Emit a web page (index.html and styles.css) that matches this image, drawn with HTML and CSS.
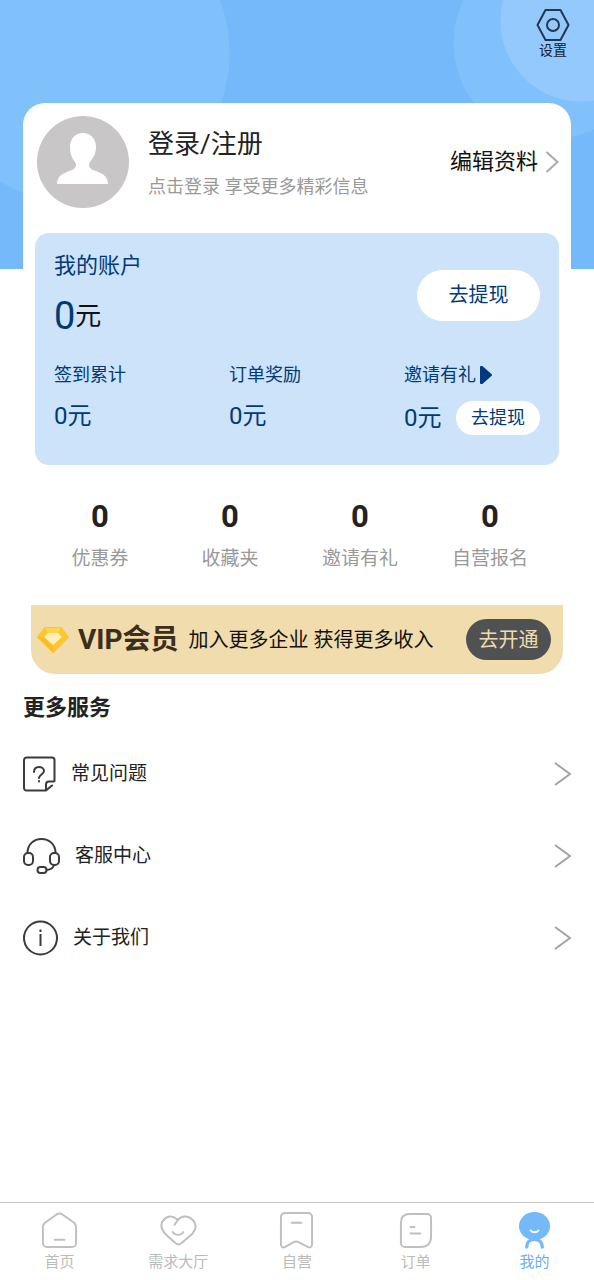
FILE: index.html
```html
<!DOCTYPE html>
<html lang="zh-CN">
<head>
<meta charset="utf-8">
<meta name="viewport" content="width=device-width, initial-scale=1">
<title>我的</title>
<link rel="stylesheet" href="styles.css">
</head>
<body>
<div class="page">
  <header class="topbar">
    <button class="settings" type="button">
      <svg width="34" height="34" viewBox="0 0 34 34" fill="none" stroke="#24384d" stroke-width="2" stroke-linejoin="round"><path d="M9.500 2h15L32.500 17l-8 15h-15L1.500 17z"/><circle cx="17" cy="17" r="6"/></svg>
      <span>设置</span>
    </button>
  </header>
  <main class="main">
    <section class="card">
      <div class="profile">
        <svg class="avatar" width="92" height="92" viewBox="0 0 92 92"><circle cx="46" cy="46" r="46" fill="#c8c6c7"/><path fill="#fff" d="M46 17c-8 0-13 6-13 14 0 7 2 11 5 15 2 3 1 6-3 8-8 3-15 5-15 14h51c0-9-7-11-15-14-4-2-5-5-3-8 3-4 6-8 6-15 0-8-5-14-13-14z"/></svg>
        <div class="profile-text">
          <h1 class="login"><a href="#login">登录/注册</a></h1>
          <p class="hint">点击登录 享受更多精彩信息</p>
        </div>
        <a class="edit" href="#edit">编辑资料
          <svg width="14" height="24" viewBox="0 0 14 24" fill="none" stroke="#aaa" stroke-width="2"><path d="M1.500 2 12.500 12 1.500 22"/></svg>
        </a>
      </div>
      <section class="account">
        <div class="account-top">
          <div>
            <h2 class="account-title">我的账户</h2>
            <p class="balance"><span class="balance-num">0</span>元</p>
          </div>
          <button class="pill" type="button">去提现</button>
        </div>
        <div class="earnings">
          <div><h3 class="earn-label">签到累计</h3><p class="earn-value">0元</p></div>
          <div><h3 class="earn-label">订单奖励</h3><p class="earn-value">0元</p></div>
          <div>
            <h3 class="earn-label">邀请有礼<svg width="12" height="20" viewBox="0 0 12 20"><path fill="#023a80" stroke="#023a80" stroke-width="2" stroke-linejoin="round" d="M1 2h1l9 8-9 8H1z"/></svg></h3>
            <div class="earn-row"><p class="earn-value">0元</p><button class="pill pill-small" type="button">去提现</button></div>
          </div>
        </div>
      </section>
    </section>
    <nav class="counts">
      <a href="#coupons"><b>0</b><span>优惠券</span></a>
      <a href="#favorites"><b>0</b><span>收藏夹</span></a>
      <a href="#invite"><b>0</b><span>邀请有礼</span></a>
      <a href="#signup"><b>0</b><span>自营报名</span></a>
    </nav>
    <section class="vip">
      <svg width="32" height="28" viewBox="0 0 32 28"><path fill="#fdc62f" stroke="#fdc62f" stroke-width="2" stroke-linejoin="round" d="M8 2h16l7 9-15 15L1 11z"/><path fill="#fdba28" d="M1 11h7l8 8v7z"/><path fill="#ffd44c" d="M8 2h16l-3 5H11z"/><path fill="#fff0b8" d="M11 7h10l4 4-9 8-9-8z"/></svg>
      <strong class="vip-title">VIP会员</strong>
      <p class="vip-text">加入更多企业 获得更多收入</p>
      <button class="vip-button" type="button">去开通</button>
    </section>
    <section class="services">
      <h2 class="services-title">更多服务</h2>
      <ul class="list">
        <li><a href="#faq">
          <svg width="33" height="36" viewBox="0 0 33 36" fill="none" stroke="#3b3b3b" stroke-width="2" stroke-linecap="round" stroke-linejoin="round"><path d="M31.500 25V4a2.500 2.500 0 0 0-2.500-2.500H3.500A2.500 2.500 0 0 0 1 4v28a2.500 2.500 0 0 0 2.500 2.500H23l6-5M31 25.500h-5a3 3 0 0 0-3 3v5.500"/><path d="M11 16c0-7 10-6 10-1 0 3-5 4-5 7"/><path d="M16 25v.5"/></svg>
          <span>常见问题</span><svg class="arrow" width="18" height="28" viewBox="0 0 18 28"><path d="M2 3l15 11L2 25"/></svg></a></li>
        <li><a href="#support">
          <svg width="37" height="36" viewBox="0 0 37 36" fill="none" stroke="#3b3b3b" stroke-width="2"><rect x="1" y="15" width="9" height="12" rx="4"/><rect x="27" y="15" width="9" height="12" rx="4"/><path d="M4.500 15C4.500 6 11 1 18.500 1s14 5 14 14M31 27c-1 3-4 5-8 5"/><rect x="14.500" y="29" width="9" height="6" rx="3"/></svg>
          <span>客服中心</span><svg class="arrow" width="18" height="28" viewBox="0 0 18 28"><path d="M2 3l15 11L2 25"/></svg></a></li>
        <li><a href="#about">
          <svg width="35" height="36" viewBox="0 0 35 36" fill="none" stroke="#3b3b3b" stroke-width="2"><circle cx="17.500" cy="18" r="16.500"/><path d="M17.500 14v12M17.500 9.500v2.500"/></svg>
          <span>关于我们</span><svg class="arrow" width="18" height="28" viewBox="0 0 18 28"><path d="M2 3l15 11L2 25"/></svg></a></li>
      </ul>
    </section>
  </main>
  <nav class="tabs">
    <a href="#home"><svg class="tab-icon" viewBox="0 0 38 38"><path d="M2 15c0-2 1-3 2-4L16 2.500c2-1.300 4-1.300 6 0L34 11c1 1 2 2 2 4v17a4 4 0 0 1-4 4H6a4 4 0 0 1-4-4zM14 28.500h10"/></svg><span>首页</span></a>
    <a href="#demands"><svg class="tab-icon" viewBox="0 0 38 38"><path d="M15 13l3.500-5c4-5 11-4 15 0s4 9 0 14L22 32c-2 2-4 2-6 0L5 22C1 17 0 12 4 8c4-5 10-4 14 0M13 20.500c3 4 8 4 11 0"/></svg><span>需求大厅</span></a>
    <a href="#self"><svg class="tab-icon" viewBox="0 0 38 38"><path d="M3 5a4 4 0 0 1 4-4h24a4 4 0 0 1 4 4v28c0 3-2 4-4 3l-10-5c-2-1-3-1-5 0L7 36c-2 1-4 0-4-3zM14 11h10"/></svg><span>自营</span></a>
    <a href="#orders"><svg class="tab-icon" viewBox="0 0 38 38"><path d="M13 2h18a4 4 0 0 1 4 4v19c0 7-4 11-11 11H8a4 4 0 0 1-4-4V11c0-6 3-9 9-9zM14 15.500h4M14 22h10"/></svg><span>订单</span></a>
    <a class="active" href="#me"><svg class="tab-icon" viewBox="0 0 38 38"><ellipse cx="19" cy="14.500" rx="16" ry="14.500" fill="#75b9fa" stroke="none"/><path d="M11 36c0-5 3-8 8-8s8 3 8 8" stroke="#75b9fa" stroke-width="3.500"/><path d="M15 19c2 2.500 6 2.500 8 0" stroke="#fff"/></svg><span>我的</span></a>
  </nav>
</div>
</body>
</html>
```
FILE: styles.css
```css
* { box-sizing: border-box; }
body, h1, h2, h3, p, ul { margin: 0; padding: 0; }
body {
  font-family: Roboto, "Noto Sans CJK SC", sans-serif;
  color: #222;
  background: #fff;
}
a { color: inherit; text-decoration: none; }
button { font: inherit; border: 0; padding: 0; cursor: pointer; }
h1, h2, h3 { font-weight: 400; }
svg { display: block; flex: none; }

.page {
  min-height: 100vh;
  display: flex;
  flex-direction: column;
  background-repeat: no-repeat;
  background-size: 100% 269px;
  background-image:
    radial-gradient(circle at calc(100% - 13px) 21px, #94c9fd 80px, transparent 81px),
    radial-gradient(circle at calc(100% - 44px) 43px, #80c1fb 96px, transparent 97px),
    radial-gradient(circle at 79px 53px, #80c1fb 150px, transparent 151px),
    linear-gradient(#75b9fa, #75b9fa);
}
.topbar {
  height: 103px;
  display: flex;
  justify-content: flex-end;
  align-items: flex-start;
  padding: 8px 24px 0;
}
.settings {
  display: flex;
  flex-direction: column;
  align-items: center;
  background: none;
  color: #14202c;
  font-size: 14px;
  line-height: 16px;
}
.main { flex: 1; }

.card {
  margin: 0 23px;
  padding: 13px 12px 0;
  background: #fff;
  border-radius: 22px 22px 0 0;
}
.profile {
  display: flex;
  align-items: center;
  gap: 19px;
  padding-left: 2px;
}
.profile-text { flex: 1; }
.login { font-size: 26px; line-height: 40px; color: #222; }
.hint { margin-top: 10px; font-size: 18px; line-height: 26px; color: #999; white-space: nowrap; }
.edit {
  display: flex;
  align-items: center;
  gap: 7px;
  font-size: 22px;
  line-height: 26px;
  color: #111;
  white-space: nowrap;
}

.account {
  margin-top: 25px;
  padding: 17px 19px 29px;
  background: #cce3fa;
  border-radius: 14px;
  color: #023a76;
}
.account-top { display: flex; justify-content: space-between; align-items: center; }
.account-title { font-size: 22px; line-height: 32px; }
.balance { display: flex; align-items: center; height: 48px; margin-top: 10px; font-size: 26px; line-height: 36px; color: #111; }
.balance-num { font-size: 38px; color: #023a76; }
.pill {
  width: 123px;
  height: 51px;
  border-radius: 26px;
  background: #fff;
  color: #023a76;
  font-size: 20px;
  line-height: 24px;
}
.pill-small { width: 84px; height: 34px; font-size: 18px; line-height: 20px; }
.earnings {
  display: grid;
  grid-template-columns: 9fr 9fr 7fr;
  margin-top: 22px;
}
.earn-label { display: flex; align-items: center; gap: 4px; font-size: 18px; line-height: 26px; white-space: nowrap; }
.earn-value { margin-top: 10px; font-size: 24px; line-height: 36px; }
.earn-row { display: flex; justify-content: space-between; align-items: center; margin-top: 12px; }
.earn-row .earn-value { margin-top: 0; }

.counts {
  display: grid;
  grid-template-columns: repeat(4, 1fr);
  margin: 32px 39px 0 35px;
  text-align: center;
}
.counts a { display: flex; flex-direction: column; gap: 8px; }
.counts b { font-size: 31px; line-height: 40px; }
.counts span { font-size: 19px; line-height: 28px; color: #999; }

.vip {
  display: flex;
  align-items: center;
  margin: 32px 31px 0;
  padding: 14px 12px 14px 6px;
  background: #f1dcae;
  border-radius: 0 0 24px 24px;
}
.vip-title { margin-left: 9px; font-size: 28px; line-height: 36px; color: #3b2f1c; }
.vip-text { flex: 1; margin-left: 10px; font-size: 20px; line-height: 24px; color: #111; white-space: nowrap; }
.vip-button {
  width: 85px;
  height: 41px;
  border-radius: 21px;
  background: #505152;
  color: #f1dcae;
  font-size: 20px;
  line-height: 24px;
}

.services { padding: 18px 23px 0; }
.services-title { font-size: 22px; line-height: 32px; font-weight: 700; }
.list { list-style: none; margin-top: 9px; }
.list a {
  display: flex;
  align-items: center;
  gap: 15px;
  height: 82px;
  font-size: 19px;
  line-height: 26px;
}
.list span { flex: 1; }
.arrow { fill: none; stroke: #a3a3a3; stroke-width: 2; }

.tabs {
  display: grid;
  grid-template-columns: repeat(5, 1fr);
  border-top: 1px solid #c4c4c4;
  padding: 9px 0 8px;
  background: #fff;
}
.tabs a {
  display: flex;
  flex-direction: column;
  align-items: center;
  gap: 3px;
  font-size: 15px;
  line-height: 20px;
  color: #bbb;
}
.tabs .active { color: #68b0ee; }
.tab-icon {
  width: 37px;
  height: 37px;
  fill: none;
  stroke: #bfbfbf;
  stroke-width: 2;
  stroke-linecap: round;
  stroke-linejoin: round;
}
```
